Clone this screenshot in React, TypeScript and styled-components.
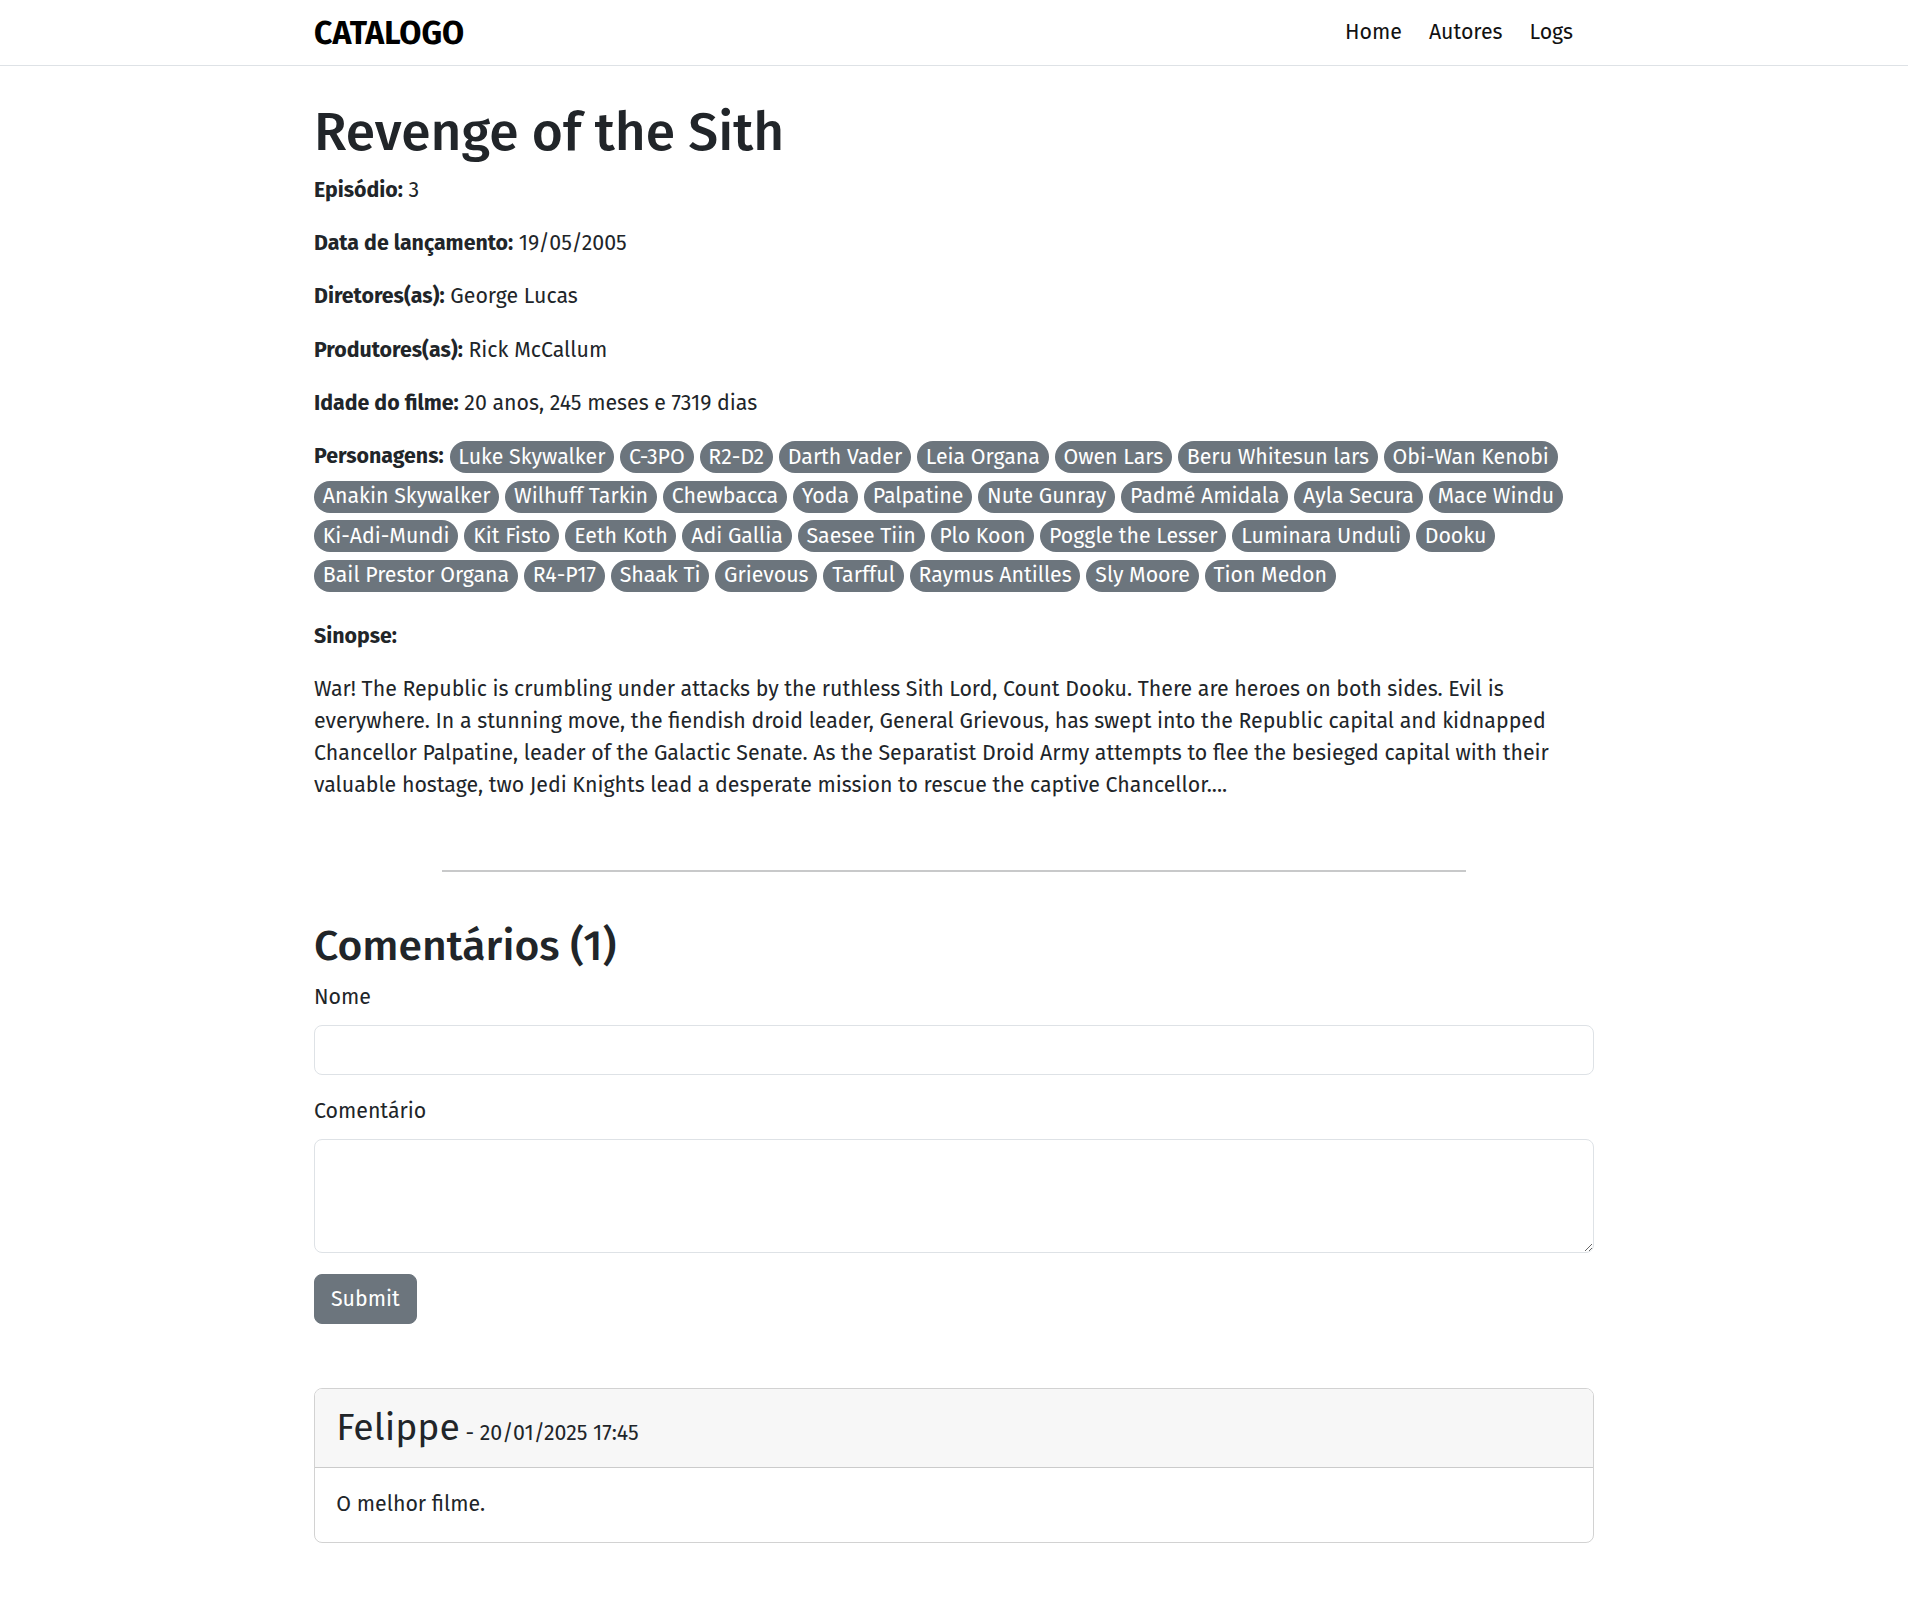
import React from 'react';
import styled, { createGlobalStyle } from 'styled-components';

const GlobalStyle = createGlobalStyle`
  html, body {
    margin: 0;
    padding: 0;
  }
  body {
    font-family: "Fira Sans", "Open Sans", sans-serif;
    font-size: 21.333px;
    line-height: 1.5;
    color: #212529;
    background: #fff;
  }
  *, *::before, *::after {
    box-sizing: border-box;
  }
`;

const characters = [
  'Luke Skywalker', 'C-3PO', 'R2-D2', 'Darth Vader', 'Leia Organa', 'Owen Lars',
  'Beru Whitesun lars', 'Obi-Wan Kenobi', 'Anakin Skywalker', 'Wilhuff Tarkin',
  'Chewbacca', 'Yoda', 'Palpatine', 'Nute Gunray', 'Padmé Amidala', 'Ayla Secura',
  'Mace Windu', 'Ki-Adi-Mundi', 'Kit Fisto', 'Eeth Koth', 'Adi Gallia', 'Saesee Tiin',
  'Plo Koon', 'Poggle the Lesser', 'Luminara Unduli', 'Dooku', 'Bail Prestor Organa',
  'R4-P17', 'Shaak Ti', 'Grievous', 'Tarfful', 'Raymus Antilles', 'Sly Moore', 'Tion Medon',
];

const details = [
  { label: 'Episódio:', value: '3' },
  { label: 'Data de lançamento:', value: '19/05/2005' },
  { label: 'Diretores(as):', value: 'George Lucas' },
  { label: 'Produtores(as):', value: 'Rick McCallum' },
  { label: 'Idade do filme:', value: '20 anos, 245 meses e 7319 dias' },
];

const sinopse =
  'War! The Republic is crumbling under attacks by the ruthless Sith Lord, Count Dooku. There are heroes on both sides. Evil is everywhere. In a stunning move, the fiendish droid leader, General Grievous, has swept into the Republic capital and kidnapped Chancellor Palpatine, leader of the Galactic Senate. As the Separatist Droid Army attempts to flee the besieged capital with their valuable hostage, two Jedi Knights lead a desperate mission to rescue the captive Chancellor....';

const App = () => {
  return (
    <>
      <GlobalStyle />
      <Navbar>
        <NavInner>
          <Brand href="#">CATALOGO</Brand>
          <NavList>
            <li><NavLink href="#">Home</NavLink></li>
            <li><NavLink href="#">Autores</NavLink></li>
            <li><NavLink href="#">Logs</NavLink></li>
          </NavList>
        </NavInner>
      </Navbar>

      <Main>
        <Title>Revenge of the Sith</Title>
        {details.map(d => (
          <Info key={d.label}>
            <strong>{d.label}</strong> {d.value}
          </Info>
        ))}

        <Characters>
          <strong>Personagens:</strong>
          {characters.map(c => (
            <Badge key={c}>{c}</Badge>
          ))}
        </Characters>

        <Info><strong>Sinopse:</strong></Info>
        <Info>{sinopse}</Info>

        <Divider />

        <Subtitle>Comentários (1)</Subtitle>
        <form onSubmit={e => e.preventDefault()}>
          <Field>
            <FieldLabel htmlFor="nome">Nome</FieldLabel>
            <Input id="nome" type="text" />
          </Field>
          <Field>
            <FieldLabel htmlFor="comentario">Comentário</FieldLabel>
            <TextArea id="comentario" rows={3} />
          </Field>
          <SubmitButton type="submit">Submit</SubmitButton>
        </form>

        <Card>
          <CardHeader>
            <Author>
              Felippe<DateText> - 20/01/2025 17:45</DateText>
            </Author>
          </CardHeader>
          <CardBody>
            <CommentText>O melhor filme.</CommentText>
          </CardBody>
        </Card>
      </Main>
    </>
  );
};

export default App;

const Navbar = styled.nav`
  border-bottom: 1px solid #dee2e6;
  background: #fff;
`;

const NavInner = styled.div`
  width: 1280px;
  margin: 0 auto;
  padding: 8.5px 0;
  display: flex;
  align-items: center;
  justify-content: space-between;
`;

const Brand = styled.a`
  font-size: 32px;
  font-weight: 700;
  line-height: 48px;
  color: #000;
  text-decoration: none;
`;

const NavList = styled.ul`
  display: flex;
  gap: 27px;
  list-style: none;
  margin: 0;
  padding: 0 21px 0 0;
`;

const NavLink = styled.a`
  color: #111;
  text-decoration: none;
  line-height: 32px;
`;

const Main = styled.main`
  width: 1280px;
  margin: 0 auto;
  padding: 34px 0 64px;
`;

const Title = styled.h1`
  font-size: 53.333px;
  font-weight: 500;
  line-height: 1.2;
  margin: 0 0 10.667px;
`;

const Info = styled.p`
  margin: 0 0 21.333px;
`;

const Characters = styled.div`
  display: flex;
  flex-wrap: wrap;
  align-items: center;
  column-gap: 6px;
  row-gap: 7.5px;
  margin-bottom: 29.5px;
`;

const Badge = styled.span`
  display: inline-block;
  background: #6c757d;
  color: #fff;
  border-radius: 50rem;
  padding: 5.333px 8.8px;
  line-height: 21.333px;
  white-space: nowrap;
`;

const Divider = styled.hr`
  width: 80%;
  margin: 68px auto 48px;
  border: 0;
  border-top: 2px solid #c8c9ca;
`;

const Subtitle = styled.h2`
  font-size: 42.667px;
  font-weight: 500;
  line-height: 1.2;
  margin: 0 0 10.667px;
`;

const Field = styled.div`
  margin-bottom: 21.333px;
`;

const FieldLabel = styled.label`
  display: inline-block;
  margin-bottom: 10.667px;
`;

const Input = styled.input`
  display: block;
  width: 100%;
  padding: 8px 16px;
  font: inherit;
  line-height: 32px;
  color: #212529;
  border: 1px solid #dee2e6;
  border-radius: 8px;
  background: #fff;
`;

const TextArea = styled.textarea`
  display: block;
  width: 100%;
  height: 114px;
  padding: 8px 16px;
  font: inherit;
  line-height: 32px;
  color: #212529;
  border: 1px solid #dee2e6;
  border-radius: 8px;
  background: #fff;
  resize: vertical;
`;

const SubmitButton = styled.button`
  padding: 8px 16px;
  font: inherit;
  line-height: 32px;
  color: #fff;
  background: #6c757d;
  border: 1px solid #6c757d;
  border-radius: 8px;
  cursor: pointer;
`;

const Card = styled.div`
  margin-top: 64px;
  border: 1px solid rgba(0, 0, 0, 0.175);
  border-radius: 8px;
  overflow: hidden;
`;

const CardHeader = styled.div`
  background: #f7f7f7;
  border-bottom: 1px solid rgba(0, 0, 0, 0.175);
  padding: 10.667px 21.333px;
`;

const Author = styled.h3`
  font-size: 37.333px;
  font-weight: 400;
  line-height: 56px;
  margin: 0;
`;

const DateText = styled.small`
  font-size: 21.333px;
  line-height: 1;
`;

const CardBody = styled.div`
  padding: 21.333px;
`;

const CommentText = styled.p`
  margin: 0;
`;
